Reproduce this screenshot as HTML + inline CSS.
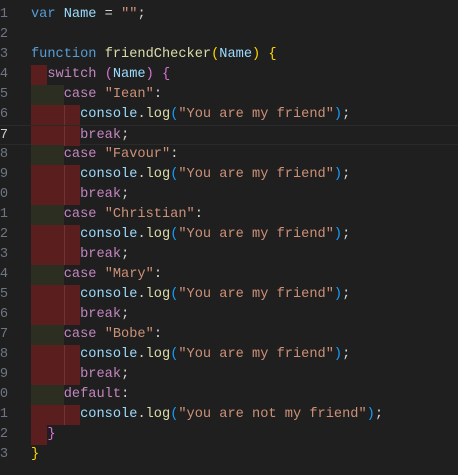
<!DOCTYPE html>
<html><head><style>
body{margin:0;width:458px;height:475px;background:#1f1f1f;overflow:hidden;position:relative;font-family:"Liberation Mono","DejaVu Sans Mono",monospace;font-size:13.65px;}
.l{position:absolute;left:0;height:20px;line-height:20px;white-space:pre;width:458px;}
.n{position:absolute;left:-8px;width:16px;text-align:right;color:#6e7681;}
.c{position:absolute;left:31px;color:#d4d4d4;}
.b{position:absolute;top:0;height:20px;}
.r{background:#5a1e1f;}
.g{background:#2c2e22;}
.k{color:#569cd6}.v{color:#9cdcfe}.f{color:#dcdcaa}.p{color:#c586c0}.s{color:#ce9178}
.y{color:#ffd700}.m{color:#da70d6}.bl{color:#179fff}
</style></head><body>
<div class="l" style="top:5px"><span class="n">1</span><span class="c"><span class="k">var</span> <span class="v">Name</span> = <span class="s">""</span>;</span></div>
<div class="l" style="top:25px"><span class="n">2</span></div>
<div class="l" style="top:45px"><span class="n">3</span><span class="c"><span class="k">function</span> <span class="f">friendChecker</span><span class="y">(</span><span class="v">Name</span><span class="y">)</span> <span class="y">{</span></span></div>
<div class="l" style="top:65px"><span class="n">4</span><div class="b r" style="left:31px;width:16px"></div><span class="c">  <span class="p">switch</span> <span class="m">(</span><span class="v">Name</span><span class="m">)</span> <span class="m">{</span></span></div>
<div id="body"></div>
<script>
var names=["Iean","Favour","Christian","Mary","Bobe"];var h="";var t=85,n=5;
function row(num,kind,content){var blk=kind=="g"?'<div class="b g" style="left:31px;width:33px"></div>':kind=="r"?'<div class="b r" style="left:31px;width:49px"></div><div class="b" style="left:64px;width:1px;background:#6e3434"></div>':'<div class="b r" style="left:31px;width:16px"></div>';
var cur=num==7?' style="top:'+t+'px;border-top:1px solid #2a2a2a;border-bottom:1px solid #2a2a2a;box-sizing:border-box"':' style="top:'+t+'px"';
h+='<div class="l"'+cur+'><span class="n"'+(num==7?' style="color:#ccc"':'')+'>'+(num%10)+'</span>'+blk+'<span class="c">'+content+'</span></div>';t+=20;n++;}
var log=function(s){return '      <span class="v">console</span>.<span class="f">log</span><span class="bl">(</span><span class="s">"'+s+'"</span><span class="bl">)</span>;'};
names.forEach(function(nm){row(n,"g",'    <span class="p">case</span> <span class="s">"'+nm+'"</span>:');row(n,"r",log("You are my friend"));row(n,"r",'      <span class="p">break</span>;');});
row(n,"g",'    <span class="p">default</span>:');row(n,"r",log("you are not my friend"));row(n,"x",'  <span class="m">}</span>');
h+='<div class="l" style="top:'+t+'px"><span class="n">3</span><span class="c"><span class="y">}</span></span></div>';
document.getElementById("body").outerHTML=h;
</script>
</body></html>
